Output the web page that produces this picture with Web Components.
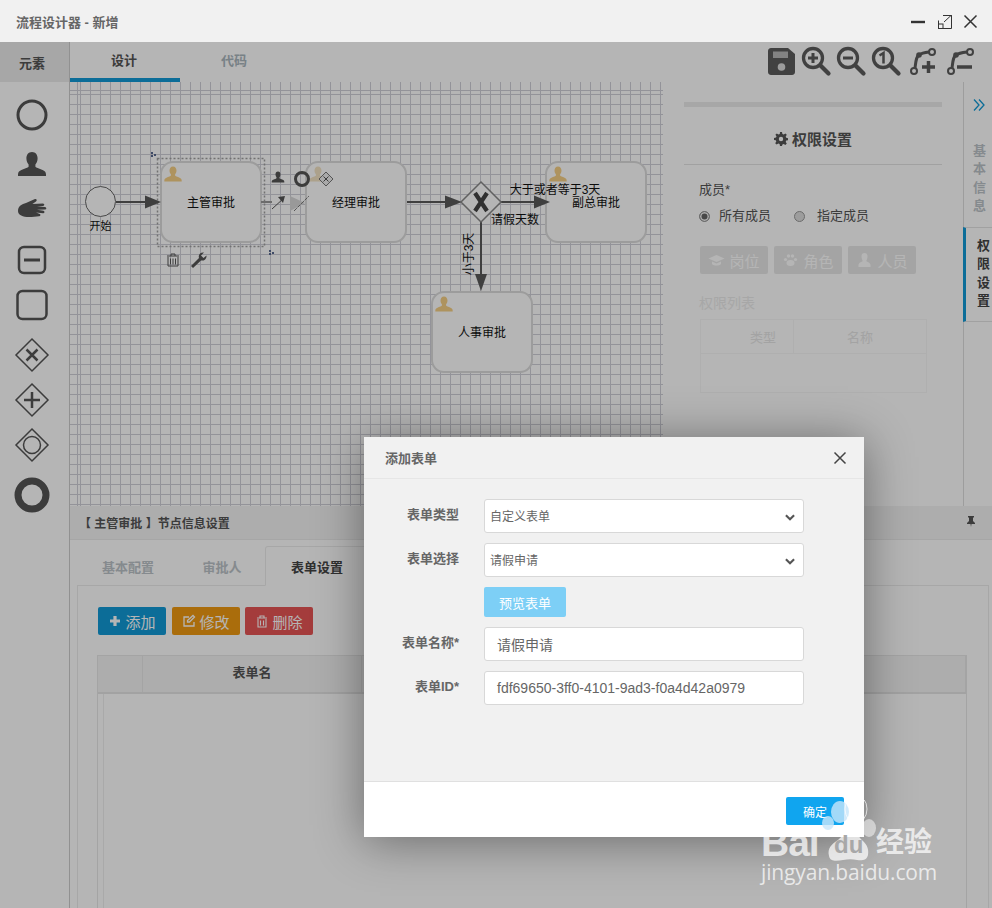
<!DOCTYPE html>
<html lang="zh">
<head>
<meta charset="utf-8">
<title>流程设计器</title>
<style>
  html, body { margin: 0; height: 908px; overflow: hidden; background: #fff; }
  body { font-family: "Liberation Sans", "Noto Sans CJK SC", sans-serif; font-size: 13px; color: #333; position: relative; }
</style>
</head>
<body>
<flow-designer></flow-designer>
<dialog-overlay>
  <form-dialog></form-dialog>
</dialog-overlay>
<baidu-mark></baidu-mark>

<script>
const PERSON = 'M0 -12c3.6 0 5.6 2.8 5.6 6.4 0 2.6-1 4.6-2.2 6v2.2c0 1 4 2 7.200 3.400 1.800.8 3.400 2 3.400 4.400v1.600h-28v-1.600c0-2.400 1.600-3.600 3.400-4.400 3.200-1.400 7.200-2.400 7.200-3.400v-2.200c-1.200-1.400-2.200-3.400-2.200-6 0-3.600 2-6.400 5.600-6.400z';

class TitleBar extends HTMLElement {
  connectedCallback() {
    this.attachShadow({ mode: "open" });
    this.shadowRoot.innerHTML = `
      <style>
        :host { display: flex; align-items: center; justify-content: space-between; height: 42px; box-sizing: border-box; background: #f1f1f1; padding: 0 11px 0 16px; }
        .title { font-size: 13px; font-weight: bold; color: #666; }
        .ctl { display: flex; gap: 5px; }
        svg { width: 21px; height: 21px; display: block; fill: none; stroke: #333; }
      </style>
      <div class="title">流程设计器 - 新增</div>
      <div class="ctl">
        <svg viewBox="0 0 21 21"><path d="M3 11h14" stroke-width="2.400"/></svg>
        <svg viewBox="0 0 21 21"><path d="M9 4.500h8.500v13h-13v-8M10 11l7-6.500M12.500 4.500h5v5" stroke-width="1" /><rect x="4.500" y="13" width="4.500" height="4.500" stroke-width="1"/></svg>
        <svg viewBox="0 0 21 21"><path d="M4.500 4.500l12 12M16.500 4.500l-12 12" stroke-width="1.500"/></svg>
      </div>
    `;
  }
}

class ElementPalette extends HTMLElement {
  connectedCallback() {
    this.attachShadow({ mode: "open" });
    this.shadowRoot.innerHTML = `
      <style>
        :host { display: flex; flex-direction: column; align-items: center; width: 70px; flex: none; box-sizing: border-box; background: #fff; border-right: 1px solid #ccc; }
        .head { align-self: stretch; height: 40px; display: flex; align-items: center; justify-content: center; padding-right: 5px; background: #ebebeb; font-size: 13px; font-weight: bold; color: #555; }
        .list { display: flex; flex-direction: column; padding-top: 15px; }
        svg { display: block; width: 36px; height: 36px; margin-top: 14px; fill: none; stroke: #555; margin-left: -5px; }
        svg.near { margin-top: 9px; }
        svg:first-child { margin-top: 0; }
      </style>
      <div class="head">元素</div>
      <div class="list">
        <svg viewBox="0 0 36 36"><circle cx="18" cy="18" r="14" stroke-width="3"/></svg>
        <svg viewBox="0 0 36 36"><path d="${PERSON}" transform="translate(18 17)" fill="#555" stroke="none"/></svg>
        <svg class="near" viewBox="0 0 36 36">
          <path d="M4 19c0-5 4-7 8-8l9-4c1.600-.6 2.400 1.400 1 2.400l-3.600 2.600 10.600-.6c1.800 0 1.800 2.400 0 2.500l-6 .6 8 .4c1.800.2 1.800 2.600 0 2.600l-8 .2 6.400 1c1.600.4 1.400 2.600-.4 2.500l-7-.6 3.800 1.400c1.200.6.6 2.400-.8 2.200-3 0-6.600 .8-10 .8-6 0-11-2-11-6z" fill="#555" stroke="none"/>
        </svg>
        <svg viewBox="0 0 36 36"><rect x="5" y="5" width="26" height="26" rx="5" stroke-width="2.500"/><path d="M10 18h16" stroke-width="3"/></svg>
        <svg class="near" viewBox="0 0 36 36"><rect x="3.500" y="4" width="29" height="28" rx="5" stroke-width="2.500"/></svg>
        <svg viewBox="0 0 36 36"><path d="M18 2l16 16-16 16L2 18z" stroke-width="1.500"/><path d="M12.500 12.500l11 11M23.500 12.500l-11 11" stroke-width="2.500"/></svg>
        <svg class="near" viewBox="0 0 36 36"><path d="M18 2l16 16-16 16L2 18z" stroke-width="1.500"/><path d="M18 10v16M10 18h16" stroke-width="2.500"/></svg>
        <svg class="near" viewBox="0 0 36 36"><path d="M18 2l16 16-16 16L2 18z" stroke-width="1.500"/><circle cx="18" cy="18" r="8.500" stroke-width="1.500"/></svg>
        <svg viewBox="0 0 36 36"><circle cx="18" cy="18" r="14" stroke-width="7"/></svg>
      </div>
    `;
  }
}

class DesignTabs extends HTMLElement {
  connectedCallback() {
    this.attachShadow({ mode: "open" });
    this.shadowRoot.innerHTML = `
      <style>
        :host { display: flex; justify-content: space-between; height: 40px; box-sizing: border-box; background: #fff; }
        .tabs { display: flex; }
        .tab { width: 110px; box-sizing: border-box; display: flex; align-items: center; justify-content: center; padding: 0 2px 2px 0; font-size: 13px; font-weight: bold; color: #aab6bd; border-bottom: 4px solid transparent; }
        .tab.on { color: #555; border-bottom-color: #129ad6; }
        .tools { display: flex; gap: 3px; padding: 3px 20px 0 0; }
        svg { width: 32px; height: 32px; display: block; fill: none; stroke: #5c5c5c; }
        .f { fill: #5c5c5c; stroke: none; }
      </style>
      <div class="tabs"><div class="tab on">设计</div><div class="tab">代码</div></div>
      <div class="tools">
        <svg viewBox="0 0 32 32"><path class="f" d="M6 3h17l7 6v18c0 1.600-1.200 3-3 3H6c-1.800 0-3-1.400-3-3V6c0-1.600 1.200-3 3-3z"/><rect x="8" y="6.500" width="15" height="6.500" fill="#b9b9b9" stroke="none"/><circle cx="16.500" cy="22" r="3.800" fill="#dcdcdc" stroke="none"/></svg>
        <svg viewBox="0 0 32 32"><circle cx="13" cy="13" r="9.500" stroke-width="3.300"/><path d="M20.500 20.500l8 8" stroke-width="4.200" stroke-linecap="round"/><path d="M13 8v10M8 13h10" stroke-width="3"/></svg>
        <svg viewBox="0 0 32 32"><circle cx="13" cy="13" r="9.500" stroke-width="3.300"/><path d="M20.500 20.500l8 8" stroke-width="4.200" stroke-linecap="round"/><path d="M8 13h10" stroke-width="3"/></svg>
        <svg viewBox="0 0 32 32"><circle cx="13" cy="13" r="9.500" stroke-width="3.300"/><path d="M20.500 20.500l8 8" stroke-width="4.200" stroke-linecap="round"/><path d="M9.500 10.500l4-2.500v10.500" stroke-width="2.500"/></svg>
        <svg viewBox="0 0 32 32"><circle cx="9" cy="26" r="3" stroke-width="2"/><circle cx="27" cy="7" r="3" stroke-width="2"/><path d="M10 23c1-7 1-11 4-13 2-1.500 6-2.500 10-3" stroke-width="3"/><circle class="f" cx="14" cy="10" r="2.800"/><path d="M17 22h13M23.500 16v12" stroke-width="3.500"/></svg>
        <svg viewBox="0 0 32 32" style="overflow:visible"><circle cx="11" cy="26" r="3" stroke-width="2"/><circle cx="30" cy="7" r="3" stroke-width="2"/><path d="M12 23c1-7 1-11 4-13 2-1.500 7-2.500 11-3" stroke-width="3"/><circle class="f" cx="16" cy="10" r="2.800"/><path d="M17 22h15" stroke-width="3.500"/></svg>
      </div>
    `;
  }
}

class FlowCanvas extends HTMLElement {
  connectedCallback() {
    this.attachShadow({ mode: "open" });
    const node = (x, y, label, tan) => `
      <rect x="${x}" y="${y}" width="100" height="80" rx="12" fill="#fff" stroke="#dcdcdc" stroke-width="2"/>
      <path d="${PERSON}" transform="translate(${x + 12} ${y + 12}) scale(.62)" fill="${tan}"/>
      <text x="${x + 50}" y="${y + 45}" text-anchor="middle">${label}</text>`;
    this.shadowRoot.innerHTML = `
      <style>
        :host {
          display: block; flex: 1; min-width: 0; overflow: hidden; background-color: #fff;
          background-image:
            repeating-linear-gradient(90deg, #cfcfd8 0 1px, transparent 1px 10px),
            repeating-linear-gradient(0deg, #cfcfd8 0 1px, transparent 1px 10px);
          background-position: 10px 0, 0 9px;
        }
        svg { display: block; width: 593px; height: 424px; }
        text { font-size: 12px; fill: #111; }
        .edge { stroke: #5a5a5a; stroke-width: 2; fill: none; }
        .head { fill: #5a5a5a; }
      </style>
      <svg viewBox="70 82 593 424">
        ${node(161, 162, "主管审批", "#f6cf85")}
        ${node(306, 162, "经理审批", "#f3e3c4")}
        ${node(546, 162, "副总审批", "#f6cf85")}
        ${node(432, 292, "人事审批", "#f6cf85")}
        <rect x="157.500" y="158.500" width="107" height="88" fill="none" stroke="#a0a0a0" stroke-width="1.500" stroke-dasharray="2 2"/>
        <g fill="#5a6a90"><rect x="151" y="152" width="2" height="2"/><rect x="154" y="154" width="2" height="2"/><rect x="151" y="155" width="2" height="2"/><rect x="269" y="250" width="2" height="2"/><rect x="272" y="252" width="2" height="2"/><rect x="269" y="253" width="2" height="2"/></g>

        <circle cx="100.500" cy="201.500" r="15" fill="#fff" stroke="#666" stroke-width="1"/>
        <text x="100.500" y="230" text-anchor="middle" font-size="11" style="font-size:11px">开始</text>

        <path class="edge" d="M116 202h30"/><path class="head" d="M145 195.500l16 6.500-16 6.500z"/>
        <path class="edge" d="M407 202h42"/><path class="head" d="M445 195.500l17 6.500-17 6.500z"/>
        <path class="edge" d="M501 202h34"/><path class="head" d="M534 195.500l16 6.500-16 6.500z"/>
        <path class="edge" d="M481 222v55"/><path class="head" d="M475 274h12l-6 17z"/>

        <path d="M481 182l20 20-20 20-20-20z" fill="#fff" stroke="#888" stroke-width="1.500"/>
        <path d="M475 193l12 18M487 193l-12 18" stroke="#444" stroke-width="4.200"/>

        <text x="555" y="194" text-anchor="middle">大于或者等于3天</text>
        <text x="515" y="224" text-anchor="middle">请假天数</text>
        <text transform="translate(473 254) rotate(-90)" text-anchor="middle">小于3天</text>

        <!-- hover actions on the selected node -->
        <g transform="translate(173 260)" fill="none" stroke="#555" stroke-width="1"><path d="M-6-4h12M-2-4v-2h4v2M-5-3v9h10v-9M-2.500-1.500v6M0-1.500v6M2.500-1.500v6"/></g>
        <path d="M191 266l8-8c-1-3 1-6 5-5.500l-3 3 2.500 2.500 3-2.500c.4 3.500-2.500 5.500-5.500 5l-8 7.500z" fill="#555"/>
        <path d="${PERSON}" transform="translate(278 177) scale(.45)" fill="#555"/>
        <circle cx="302" cy="179" r="6.500" fill="none" stroke="#555" stroke-width="3"/>
        <path d="M326 172l7 7-7 7-7-7z" fill="#eee" stroke="#777"/><path d="M323.500 176.500l5 5M328.500 176.500l-5 5" stroke="#555"/>
        <rect x="261" y="201" width="11" height="2" fill="#999"/>
        <path d="M272 209l12-11" stroke="#555"/><path d="M278 197l7-1-2 7z" fill="#555"/>
        <path d="M290 196l15 7-15 8z" fill="#d8d8d8"/><path d="M294 211l15-15" stroke="#777" stroke-dasharray="4 1"/>
      </svg>
    `;
  }
}

class AclPanel extends HTMLElement {
  connectedCallback() {
    this.attachShadow({ mode: "open" });
    this.shadowRoot.innerHTML = `
      <style>
        :host { display: block; width: 300px; flex: none; box-sizing: border-box; background: #fff; padding: 20px 21px 0 21px; }
        .bar { height: 5px; background: #ececec; }
        h3 { margin: 0; height: 58px; box-sizing: border-box; padding-top: 6px; display: flex; align-items: center; justify-content: center; gap: 4px; font-size: 15px; font-weight: bold; color: #555; border-bottom: 1px solid #e3e3e3; }
        h3 svg { width: 14px; height: 14px; fill: #555; }
        .form { padding: 16px 0 0 15px; }
        .lab { font-size: 13px; color: #555; line-height: 18px; }
        .radios { display: flex; gap: 23px; margin-top: 8px; line-height: 18px; color: #555; }
        .radios span { display: flex; align-items: center; gap: 9px; }
        .radios span + span { gap: 12px; }
        i { width: 9px; height: 9px; border-radius: 50%; border: 1px solid #999; background: #ddd; display: block; }
        i.on { background: #666; box-shadow: inset 0 0 0 1.500px #f4f4f4; }
        .btns { display: flex; gap: 6px; margin: 21px 0 0 1px; }
        .btns div { width: 68px; height: 28px; display: flex; align-items: center; justify-content: center; gap: 4px; background: #e8e8e8; border-radius: 2px; color: #fff; font-size: 15px; }
        .btns svg { width: 17px; height: 14px; fill: #fff; }
        .cap { margin-top: 20px; color: #ececec; line-height: 18px; font-size: 14px; }
        table { width: 227px; margin: 7px 0 0 1px; table-layout: fixed; border-collapse: collapse; color: #e6e6e6; font-size: 13px; }
        th { font-weight: normal; height: 34px; box-sizing: border-box; border: 1px solid #f7f7f7; }
        th:first-child { width: 93px; padding-left: 33px; }
        td { height: 36px; border: 1px solid #f7f7f7; }
      </style>
      <div class="bar"></div>
      <h3><svg viewBox="0 0 14 14"><path d="M6 0h2l.4 2 1.300.5L11.400 1.400l1.400 1.400-1.100 1.700.5 1.300 2 .4v2l-2 .4-.5 1.300 1.100 1.700-1.400 1.400-1.700-1.100-1.300.5L8 14H6l-.4-2-1.300-.5-1.700 1.100-1.400-1.400 1.100-1.700-.5-1.300L0 8V6l2-.4.5-1.300L1.400 2.800l1.400-1.400 1.700 1.100 1.300-.5zM7 4.800a2.200 2.200 0 100 4.400 2.200 2.200 0 000-4.400z"/></svg>权限设置</h3>
      <div class="form">
        <div class="lab">成员*</div>
        <div class="radios"><span><i class="on"></i>所有成员</span><span><i></i>指定成员</span></div>
        <div class="btns">
          <div><svg viewBox="0 0 16 14"><path d="M8 2L0 5.500 8 9l8-3.500zM3.500 8.500v2.500c2 2 7 2 9 0V8.500L8 10.500z"/></svg>岗位</div>
          <div><svg viewBox="0 0 16 14"><ellipse cx="8" cy="10" rx="4" ry="3"/><circle cx="3" cy="6.500" r="1.600"/><circle cx="13" cy="6.500" r="1.600"/><circle cx="6" cy="3" r="1.700"/><circle cx="10" cy="3" r="1.700"/></svg>角色</div>
          <div><svg viewBox="0 0 16 14"><path d="M8 0c2 0 3 1.500 3 3.500S10 7 9.800 8c0 .8 4.200 1.500 4.200 4v2H2v-2c0-2.500 4.200-3.200 4.200-4C6 7 5 5.500 5 3.500S6 0 8 0z"/></svg>人员</div>
        </div>
        <div class="cap">权限列表</div>
        <table><tr><th>类型</th><th>名称</th></tr><tr><td colspan="2"></td></tr></table>
      </div>
    `;
  }
}

class SideTabs extends HTMLElement {
  connectedCallback() {
    this.attachShadow({ mode: "open" });
    this.shadowRoot.innerHTML = `
      <style>
        :host { display: flex; flex-direction: column; width: 29px; flex: none; box-sizing: border-box; background: #fff; border-left: 1px solid #ddd; }
        svg { width: 14px; height: 14px; display: block; margin: 16px 0 0 8px; fill: none; stroke: #129ad6; stroke-width: 1.300; }
        .t { width: 14px; margin-left: 9px; font-size: 13px; line-height: 18.300px; font-weight: bold; color: #bcc3c8; }
        .one { margin-top: 30px; height: 69px; }
        .two { width: auto; margin: 16px 0 0 -1px; padding: 9px 0 10px 11px; box-sizing: border-box; height: 95px; color: #444; border-left: 3px solid #129ad6; border-top: 1px solid #e3e3e3; border-bottom: 1px solid #e3e3e3; background: #fff; }
      </style>
      <svg viewBox="0 0 14 14"><path d="M2 1.500L7 7l-5 5.500M7 1.500L12 7l-5 5.500"/></svg>
      <div class="t one">基本信息</div>
      <div class="t two">权<br>限<br>设<br>置</div>
    `;
  }
}

class NodeSettings extends HTMLElement {
  connectedCallback() {
    this.attachShadow({ mode: "open" });
    this.shadowRoot.innerHTML = `
      <style>
        :host { display: flex; flex-direction: column; flex: 1; min-height: 0; background: #fff; }
        .head { height: 34px; flex: none; box-sizing: border-box; display: flex; align-items: center; justify-content: space-between; padding: 0 15px 0 9px; background: #f4f4f4; border-bottom: 1px solid #eaeaea; font-size: 12px; font-weight: bold; color: #555; }
        .head svg { width: 12px; height: 12px; fill: #555; display: block; margin-top: -4px; }
        .tabs { display: flex; height: 40px; flex: none; margin: 6px 0 -1px 7px; box-sizing: border-box; font-size: 13px; font-weight: bold; color: #bcc3c8; }
        .tabs div { display: flex; align-items: center; justify-content: center; }
        .tabs .a { width: 102px; }
        .tabs .b { width: 86px; }
        .tabs .c { width: 104px; color: #444; background: #fff; border: 1px solid #ececec; border-bottom-color: #fff; box-sizing: border-box; border-radius: 3px 3px 0 0; position: relative; }
        .box { flex: 1; margin: 0 3px 0 7px; border: 1px solid #ececec; padding: 21px 21px 0 20px; }
        .btns { display: flex; gap: 6px; }
        .btns div { width: 68px; height: 28px; display: flex; align-items: center; justify-content: center; gap: 3px; border-radius: 2px; color: #fff; font-size: 15px; }
        .btns svg { width: 14px; height: 14px; fill: none; stroke: #fff; }
        .blue { background: #129ad6; }
        .orange { background: #f09a12; }
        .btns .red { background: #e85555; margin-left: -1px; }
        .grid { margin: 20px 0 0 -1px; border: 1px solid #e8e8e8; min-height: 300px; background: linear-gradient(90deg, transparent 5px, #efefef 5px 6px, transparent 6px); }
        .row { display: grid; grid-template-columns: 45px 219px 1fr; height: 36px; background: #f4f4f4; border-bottom: 2px solid #e4e4e4; font-size: 13px; font-weight: bold; color: #555; }
        .row div { display: flex; align-items: center; justify-content: center; padding-bottom: 5px; border-right: 1px solid #e8e8e8; }
      </style>
      <div class="head">
        <div>【 主管审批 】节点信息设置</div>
        <svg viewBox="0 0 12 12"><path d="M3 1h6v1L8 3v3l2 2v1H6.500L6 12l-.5-3H2V8l2-2V3L3 2z"/></svg>
      </div>
      <div class="tabs"><div class="a">基本配置</div><div class="b">审批人</div><div class="c">表单设置</div></div>
      <div class="box">
        <div class="btns">
          <div class="blue"><svg viewBox="0 0 14 14"><path d="M7 2v10M2 7h10" stroke-width="3.200"/></svg>添加</div>
          <div class="orange"><svg viewBox="0 0 14 14"><path d="M12 8v4H2V3h5M5.500 6.500L11 1.500l1.500 1.500L7.500 8H5.500z" stroke-width="1.300"/></svg>修改</div>
          <div class="red"><svg viewBox="0 0 14 14"><path d="M2 4h10M5 4V2h4v2M3 5v8h8V5M5.500 6.500v5M8.500 6.500v5" stroke-width="1.100"/></svg>删除</div>
        </div>
        <div class="grid"><div class="row"><div></div><div>表单名</div><div></div></div></div>
      </div>
    `;
  }
}

class FlowDesigner extends HTMLElement {
  connectedCallback() {
    this.attachShadow({ mode: "open" });
    this.shadowRoot.innerHTML = `
      <style>
        :host { display: flex; flex-direction: column; height: 908px; overflow: hidden; }
        .body { display: flex; flex: 1; min-height: 0; }
        .main { display: flex; flex-direction: column; flex: 1; min-width: 0; }
        .work { display: flex; height: 424px; flex: none; }
      </style>
      <title-bar></title-bar>
      <div class="body">
        <element-palette></element-palette>
        <div class="main">
          <design-tabs></design-tabs>
          <div class="work">
            <flow-canvas></flow-canvas>
            <acl-panel></acl-panel>
            <side-tabs></side-tabs>
          </div>
          <node-settings></node-settings>
        </div>
      </div>
    `;
  }
}

class DialogOverlay extends HTMLElement {
  connectedCallback() {
    this.attachShadow({ mode: "open" });
    this.shadowRoot.innerHTML = `
      <style>
        :host { position: absolute; left: 0; right: 0; top: 42px; bottom: 0; background: rgba(0,0,0,.29); padding: 395px 0 0 364px; box-sizing: border-box; }
      </style>
      <slot></slot>
    `;
  }
}

class FormDialog extends HTMLElement {
  connectedCallback() {
    this.attachShadow({ mode: "open" });
    const chevron = `<svg viewBox="0 0 12 12"><path d="M2.500 4.500l3.500 3.500 3.500-3.500" fill="none" stroke="#555" stroke-width="1.800"/></svg>`;
    this.shadowRoot.innerHTML = `
      <style>
        :host { display: flex; flex-direction: column; width: 500px; height: 400px; background: #f1f1f1; box-shadow: 0 4px 45px rgba(0,0,0,.42); }
        .head { height: 42px; box-sizing: border-box; display: flex; align-items: center; justify-content: space-between; padding: 0 17px 0 21px; border-bottom: 1px solid #e6e6e6; }
        .head b { font-size: 13px; color: #666; }
        .head svg { width: 14px; height: 14px; display: block; }
        .form { flex: 1; display: grid; grid-template-columns: 95px 320px; column-gap: 25px; row-gap: 10px; align-content: start; padding-top: 20px; border-bottom: 1px solid #e0e0e0; }
        label { text-align: right; font-size: 13px; font-weight: bold; color: #666; line-height: 31px; height: 34px; }
        .ctl { height: 34px; box-sizing: border-box; display: flex; align-items: center; justify-content: space-between; background: #fff; border: 1px solid #d8d8d8; border-radius: 3px; color: #666; }
        .sel { font-size: 12px; padding: 0 6px 2px 5px; }
        .sel svg { width: 14px; height: 14px; display: block; margin-top: 4px; }
        .inp { font-size: 14px; padding: 0 12px; }
        .btn { width: 82px; height: 30px; display: flex; align-items: center; justify-content: center; background: #7dcff6; border-radius: 2px; color: #fff; font-size: 13px; }
        .foot { height: 55px; flex: none; background: #fff; display: flex; justify-content: flex-end; align-items: flex-start; padding: 15px 20px 0 0; box-sizing: border-box; }
        .ok { width: 58px; height: 28px; display: flex; align-items: center; justify-content: center; background: #10a5ef; border-radius: 2px; color: #fff; font-size: 12px; }
      </style>
      <div class="head"><b>添加表单</b><svg viewBox="0 0 14 14"><path d="M1.500 1.500l11 11M12.500 1.500l-11 11" stroke="#444" stroke-width="1.500"/></svg></div>
      <div class="form">
        <label>表单类型</label><div class="ctl sel">自定义表单${chevron}</div>
        <label>表单选择</label><div class="ctl sel">请假申请${chevron}</div>
        <span></span><div class="btn">预览表单</div>
        <label>表单名称*</label><div class="ctl inp">请假申请</div>
        <label>表单ID*</label><div class="ctl inp">fdf69650-3ff0-4101-9ad3-f0a4d42a0979</div>
      </div>
      <div class="foot"><div class="ok">确定</div></div>
    `;
  }
}

class BaiduMark extends HTMLElement {
  connectedCallback() {
    this.attachShadow({ mode: "open" });
    this.shadowRoot.innerHTML = `
      <style>
        :host { position: absolute; left: 755px; top: 800px; width: 190px; height: 95px; color: rgba(255,255,255,.72); pointer-events: none; }
        svg { position: absolute; left: 0; top: 0; width: 190px; height: 95px; }
        .bai { position: absolute; left: 6px; top: 26px; font: bold 39px/33px "Liberation Sans", sans-serif; letter-spacing: -1px; }
        .jy { position: absolute; left: 121px; top: 22px; font: bold 28px/36px "Noto Sans CJK SC", sans-serif; }
        .url { position: absolute; left: 6px; top: 60px; font: 21px/25px "Open Sans", sans-serif; letter-spacing: -.15px; white-space: nowrap; }
        .du { position: absolute; left: 79px; top: 32px; font: bold 24px/26px "Liberation Sans", sans-serif; color: #a8a8a8; }
      </style>
      <svg viewBox="0 0 190 95">
        <ellipse cx="85" cy="12" rx="9" ry="11" fill="rgba(200,230,250,.8)"/>
        <ellipse cx="73" cy="23" rx="6" ry="7" fill="rgba(200,230,250,.8)"/>
        <ellipse cx="101" cy="9" rx="11" ry="14" fill="none" stroke="rgba(255,255,255,.7)"/>
        <ellipse cx="114" cy="28" rx="7" ry="9" fill="rgba(255,255,255,.5)"/>
        <path d="M74 56c-2-8 3-12 9-16 5-4 8-10 14-8 6 1 7 6 11 9 4 4 6 8 5 14-1 5-6 6-11 5-4-1-9-1-14 0-6 1-13 2-14-4z" fill="rgba(255,255,255,.72)"/>
      </svg>
      <div class="bai">Bai</div>
      <div class="du">du</div>
      <div class="jy">经验</div>
      <div class="url">jingyan.baidu.com</div>
    `;
  }
}

customElements.define("title-bar", TitleBar);
customElements.define("element-palette", ElementPalette);
customElements.define("design-tabs", DesignTabs);
customElements.define("flow-canvas", FlowCanvas);
customElements.define("acl-panel", AclPanel);
customElements.define("side-tabs", SideTabs);
customElements.define("node-settings", NodeSettings);
customElements.define("flow-designer", FlowDesigner);
customElements.define("dialog-overlay", DialogOverlay);
customElements.define("form-dialog", FormDialog);
customElements.define("baidu-mark", BaiduMark);
</script>
</body>
</html>
